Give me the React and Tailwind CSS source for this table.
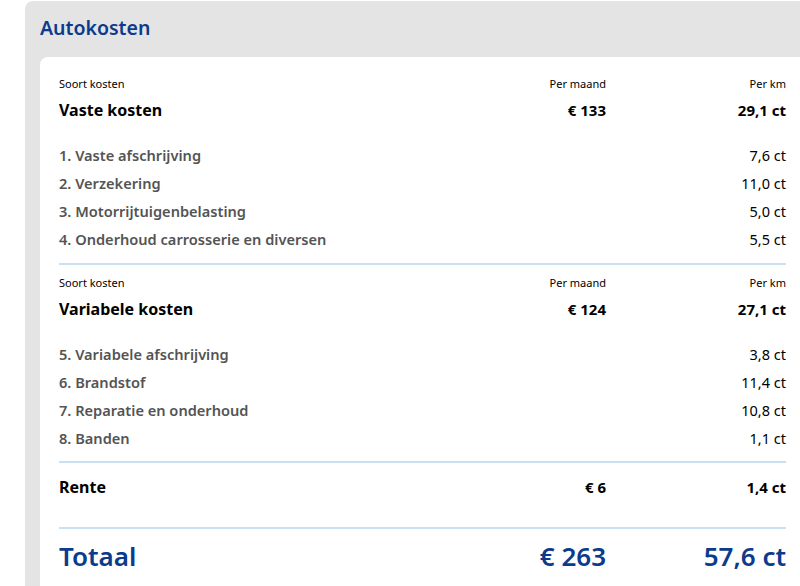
import React from "react";

const font = { fontFamily: '"Noto Sans", "Open Sans", sans-serif' };

function Section({ title, month, km, items, top }) {
  return (
    <div className={`pt-[10px] ${top ? "pb-[9px]" : "pb-[8px]"} border-b-2 border-[#c9e0f1]`}>
      <div className="grid grid-cols-[1fr_120px_180px] h-[16px] items-center text-[11px] text-black">
        <div>Soort kosten</div>
        <div className="text-right">Per maand</div>
        <div className="text-right">Per km</div>
      </div>
      <div className="mt-[6px] grid grid-cols-[1fr_120px_180px] h-[24px] items-center font-bold text-black">
        <div className="text-[16px]">{title}</div>
        <div className="text-right text-[15px]">{month}</div>
        <div className="text-right text-[15px]">{km}</div>
      </div>
      <div className="mt-[20px]">
        {items.map(([l, v]) => (
          <div key={l} className="grid grid-cols-[1fr_180px] h-[28px] items-center">
            <div className="text-[14.6px] font-semibold text-[#545454]">{l}</div>
            <div className="text-right text-[14.5px] text-black">{v}</div>
          </div>
        ))}
      </div>
    </div>
  );
}

export default function App() {
  return (
    <div className="w-[800px] h-[586px] overflow-hidden bg-white pl-[25px] pt-[1px]" style={font}>
      <div className="bg-[#e4e4e4] rounded-tl-[8px] h-[700px] pl-[15px] pr-0">
        <div className="h-[56px] flex items-center pb-[2px]">
          <h1 className="text-[19.5px] font-semibold text-[#0b3b8c]">Autokosten</h1>
        </div>
        <div className="bg-white rounded-tl-[8px] pl-[19px] pr-[14px] pt-[9px] h-[700px]">
          <Section
            top
            title="Vaste kosten"
            month="€ 133"
            km="29,1 ct"
            items={[
              ["1. Vaste afschrijving", "7,6 ct"],
              ["2. Verzekering", "11,0 ct"],
              ["3. Motorrijtuigenbelasting", "5,0 ct"],
              ["4. Onderhoud carrosserie en diversen", "5,5 ct"],
            ]}
          />
          <Section
            title="Variabele kosten"
            month="€ 124"
            km="27,1 ct"
            items={[
              ["5. Variabele afschrijving", "3,8 ct"],
              ["6. Brandstof", "11,4 ct"],
              ["7. Reparatie en onderhoud", "10,8 ct"],
              ["8. Banden", "1,1 ct"],
            ]}
          />
          <div className="pt-[12px] pb-[28px] border-b-2 border-[#c9e0f1]">
            <div className="grid grid-cols-[1fr_120px_180px] h-[24px] items-center font-bold text-black">
              <div className="text-[16px]">Rente</div>
              <div className="text-right text-[15px]">€ 6</div>
              <div className="text-right text-[15px]">1,4 ct</div>
            </div>
          </div>
          <div className="grid grid-cols-[1fr_120px_180px] h-[54px] items-center font-semibold text-[#0b3b8c]">
            <div className="text-[26px]">Totaal</div>
            <div className="text-right text-[26px]">€ 263</div>
            <div className="text-right text-[26px]">57,6 ct</div>
          </div>
        </div>
      </div>
    </div>
  );
}
